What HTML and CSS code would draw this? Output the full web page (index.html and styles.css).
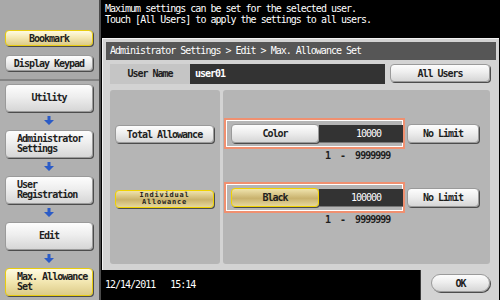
FILE: index.html
```html
<!DOCTYPE html>
<html lang="en">
<head>
    <meta charset="UTF-8">
    <title>Max. Allowance Set</title>
    <link rel="stylesheet" href="styles.css">
</head>
<body>
    <div class="screen">
        <aside class="sidebar">
            <div class="side-top">
                <button class="key key-yellow side-key">Bookmark</button>
                <button class="key side-key">Display Keypad</button>
            </div>
            <div class="side-steps">
                <button class="key step center">Utility</button>
                <svg class="arrow" width="10" height="9" viewBox="0 0 10 9"><path d="M3.5 0h3v4h3.5l-5 5-5-5h3.5z"/></svg>
                <button class="key step">Administrator<br>Settings</button>
                <svg class="arrow" width="10" height="9" viewBox="0 0 10 9"><path d="M3.5 0h3v4h3.5l-5 5-5-5h3.5z"/></svg>
                <button class="key step">User<br>Registration</button>
                <svg class="arrow" width="10" height="9" viewBox="0 0 10 9"><path d="M3.5 0h3v4h3.5l-5 5-5-5h3.5z"/></svg>
                <button class="key step center">Edit</button>
                <svg class="arrow" width="10" height="9" viewBox="0 0 10 9"><path d="M3.5 0h3v4h3.5l-5 5-5-5h3.5z"/></svg>
                <button class="key key-yellow step">Max. Allowance<br>Set</button>
            </div>
        </aside>

        <main class="main">
            <div class="message">
                Maximum settings can be set for the selected user.<br>
                Touch [All Users] to apply the settings to all users.
            </div>

            <section class="frame">
                <div class="title">Administrator Settings &gt; Edit &gt; Max. Allowance Set</div>

                <div class="user-row">
                    <div class="user-label">User Name</div>
                    <div class="user-value">user01</div>
                    <button class="key all-users">All Users</button>
                </div>

                <div class="panels">
                    <div class="panel panel-left">
                        <button class="key total">Total Allowance</button>
                        <button class="key key-gold individual">Individual<br>Allowance</button>
                    </div>
                    <div class="panel panel-right">
                        <div class="limit-row">
                            <div class="limit-box">
                                <button class="key limit-key">Color</button>
                                <div class="limit-value">10000</div>
                            </div>
                            <button class="key no-limit">No Limit</button>
                        </div>
                        <div class="range">1 &nbsp;- &nbsp;9999999</div>

                        <div class="limit-row second">
                            <div class="limit-box">
                                <button class="key key-gold limit-key">Black</button>
                                <div class="limit-value">100000</div>
                            </div>
                            <button class="key no-limit">No Limit</button>
                        </div>
                        <div class="range">1 &nbsp;- &nbsp;9999999</div>
                    </div>
                </div>
            </section>

            <div class="bottom">
                <div class="status">12/14/2011 &nbsp;&nbsp;15:14</div>
                <div class="ok-tab">
                    <button class="key ok">OK</button>
                </div>
            </div>
        </main>
    </div>
</body>
</html>
```

FILE: styles.css
```css
:root {
    --frame: #d3d3d3;
    --panel: #b5b5b5;
    --dark-field: #333333;
    --text: #1e1e1e;
    --orange: #f09070;
}

* {
    margin: 0;
    padding: 0;
    box-sizing: border-box;
}

body {
    width: 500px;
    height: 300px;
    overflow: hidden;
    background: #000;
    font-family: 'DejaVu Sans Mono', 'Liberation Mono', monospace;
    font-size: 10px;
    letter-spacing: -1px;
    color: var(--text);
}

.screen {
    display: flex;
    width: 500px;
    height: 300px;
}

/* Sidebar */
.sidebar {
    width: 101px;
    background: #b0b0b0;
    border-right: 2px solid #4a4a4a;
    display: flex;
    flex-direction: column;
}

.side-top {
    height: 81px;
    background: #a9a9a9;
    border-bottom: 2px solid #848484;
    padding: 30px 6px 0 5px;
    display: flex;
    flex-direction: column;
    gap: 9px;
}

.side-key {
    height: 16px;
}

.side-steps {
    padding: 3px 6px 0 5px;
    display: flex;
    flex-direction: column;
    align-items: center;
}

.key {
    font-family: inherit;
    font-size: 10px;
    font-weight: bold;
    letter-spacing: -1px;
    color: var(--text);
    border: 1px solid #9a9a9a;
    border-radius: 4px;
    background: linear-gradient(#fdfdfd, #eeeeee 45%, #d6d6d6);
    box-shadow: 1px 1px 0 #4c4c4c;
    cursor: pointer;
}

.key-yellow {
    border-color: #e8cc10;
    background: linear-gradient(#fffbe2, #f2e6b0 50%, #dccb88);
}

.key-gold {
    border-color: #f0d200;
    background: linear-gradient(#efe3ad, #c9b26d 55%, #e6d79c);
}

.step {
    width: 100%;
    height: 28px;
    text-align: left;
    padding-left: 11px;
    line-height: 10px;
}

.step.center {
    text-align: center;
    padding-left: 0;
}

.arrow {
    fill: #2b5bc6;
    margin: 4px 0 5px;
}

/* Main area */
.main {
    flex: 1;
    display: flex;
    flex-direction: column;
}

.message {
    height: 38px;
    padding: 3px 4px 0;
    line-height: 11px;
    color: #fff;
}

.frame {
    height: 232px;
    margin: 0 1px 0 1px;
    background: var(--frame);
    border-top: 1px solid #f2f2f2;
    border-left: 1px solid #f2f2f2;
    padding: 3px 3px 0 3px;
}

.title {
    height: 18px;
    background: #565656;
    color: #fff;
    line-height: 18px;
    padding-left: 4px;
}

.user-row {
    display: flex;
    height: 20px;
    margin: 4px 6px 0 4px;
}

.user-label {
    width: 80px;
    background: #c5c5c5;
    text-align: center;
    line-height: 20px;
    font-weight: bold;
}

.user-value {
    width: 195px;
    background: var(--dark-field);
    color: #fff;
    font-weight: bold;
    line-height: 20px;
    padding-left: 5px;
}

.all-users {
    margin-left: 5px;
    flex: 1;
    height: 18px;
}

.panels {
    display: flex;
    gap: 3px;
    height: 174px;
    margin: 6px 6px 0 4px;
}

.panel {
    background: var(--panel);
    border-radius: 3px;
}

.panel-left {
    width: 110px;
    padding: 35px 0 0 5px;
    display: flex;
    flex-direction: column;
    align-items: flex-start;
}

.total {
    width: 99px;
    height: 18px;
}

.individual {
    width: 99px;
    height: 18px;
    margin-top: 47px;
    font-size: 7px;
    line-height: 7px;
    letter-spacing: 0.8px;
}

.panel-right {
    flex: 1;
    padding: 28px 0 0 1px;
}

.limit-row {
    display: flex;
    align-items: center;
}

.limit-row.second {
    margin-top: 21px;
}

.limit-box {
    display: flex;
    align-items: center;
    width: 181px;
    height: 31px;
    border: 2px solid var(--orange);
    box-shadow: inset 0 0 0 1px #fff;
    padding: 0 0 0 5px;
}

.limit-key {
    width: 88px;
    height: 19px;
}

.limit-value {
    width: 84px;
    height: 18px;
    background: var(--dark-field);
    color: #fff;
    line-height: 18px;
    text-align: right;
    padding-right: 22px;
    border-bottom: 1px solid #777;
}

.no-limit {
    width: 72px;
    height: 19px;
    margin-left: 2px;
}

.range {
    margin: 2px 0 0 101px;
    line-height: 10px;
    font-weight: bold;
}

/* Bottom */
.bottom {
    flex: 1;
    display: flex;
}

.status {
    flex: 1;
    color: #fff;
    padding: 9px 0 0 4px;
}

.ok-tab {
    width: 79px;
    margin-right: 1px;
    background: var(--frame);
    border-left: 1px solid #3a3a3a;
    padding: 4px 0 0 10px;
}

.ok {
    width: 59px;
    height: 18px;
    border-radius: 9px;
}
```
